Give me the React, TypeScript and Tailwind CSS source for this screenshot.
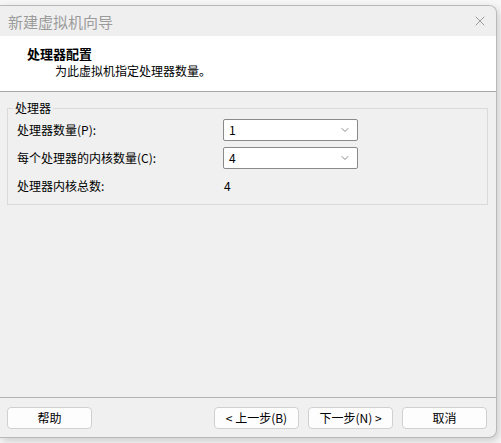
import { X, ChevronDown } from 'lucide-react';

function Select({ value }: { value: string }) {
    return (
        <div className="w-[135px] h-[22px] bg-white border border-[#8a8a8a] rounded-[2px] flex items-center justify-between pl-[5px] pr-[6px]">
            <span className="text-[12px] leading-none text-black">{value}</span>
            <ChevronDown className="w-[12px] h-[12px] text-[#555555]" strokeWidth={1.4} />
        </div>
    );
}

function Btn({ label }: { label: string }) {
    return (
        <button className="w-[85px] h-[22px] bg-[#fdfdfd] border border-[#d0d0d0] rounded-[4px] text-[12px] leading-none text-black flex items-center justify-center">
            {label}
        </button>
    );
}

export default function App() {
    return (
        <div className="w-[501px] h-[443px] bg-[#f7f7f7] pt-[5px] font-['Noto_Sans_CJK_SC',sans-serif] overflow-hidden">
            <div className="w-[497px] h-[433px] bg-[#f0f0f0] border-t border-r border-b border-[#b9b9b9] rounded-tr-[8px] rounded-br-[8px] shadow-[2px_3px_8px_rgba(0,0,0,0.18)] flex flex-col overflow-hidden">
                {/* Title bar */}
                <div className="h-[30px] flex items-center justify-between pl-[8px] pr-[8px] bg-[#efefef]">
                    <span className="text-[15px] leading-none text-[#9b9b9b]">新建虚拟机向导</span>
                    <X className="w-[16px] h-[16px] text-[#7a7a7a]" strokeWidth={1.1} />
                </div>

                {/* Header */}
                <div className="h-[56px] bg-white border-b border-[#a8a8a8] pl-[27px] pt-[10px]">
                    <p className="text-[13px] leading-[16px] font-bold text-black">处理器配置</p>
                    <p className="text-[12px] leading-[16px] text-black pl-[28px] mt-[1px]">为此虚拟机指定处理器数量。</p>
                </div>

                {/* Body */}
                <div className="flex-1 pt-[9px]">
                    <fieldset className="ml-[7px] w-[481px] h-[104px] border border-[#dadada] px-[9px] pt-[4px]">
                        <legend className="-ml-[4px] px-[2px] text-[12px] leading-[14px] text-black">处理器</legend>
                        <div className="grid grid-cols-[206px_1fr] gap-y-[6px] items-center text-[12px] leading-none text-black">
                            <span>处理器数量(P):</span>
                            <Select value="1" />
                            <span>每个处理器的内核数量(C):</span>
                            <Select value="4" />
                            <span className="h-[22px] flex items-center">处理器内核总数:</span>
                            <span className="pl-[1px]">4</span>
                        </div>
                    </fieldset>
                </div>

                {/* Footer */}
                <div className="h-[40px] border-t border-[#b4b4b4] flex items-start pt-[9px] pl-[7px] pr-[9px]">
                    <Btn label="帮助" />
                    <div className="ml-auto flex gap-[9px]">
                        <Btn label="< 上一步(B)" />
                        <Btn label="下一步(N) >" />
                        <Btn label="取消" />
                    </div>
                </div>
            </div>
        </div>
    );
}
